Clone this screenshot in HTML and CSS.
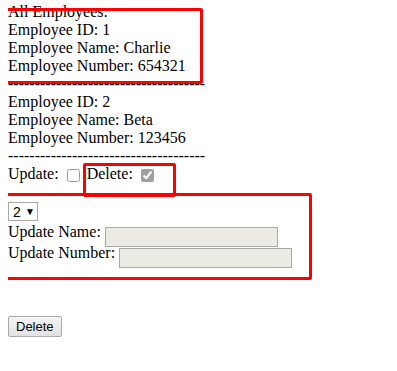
FILE: index.html
```html
<!DOCTYPE html>
<html lang="en">
<head>
    <meta charset="UTF-8">
    <title>Employees</title>
    <link rel="stylesheet" href="styles.css">
</head>
<body>
    <div class="employees">
        <div class="line">All Employees:</div>
        <div class="employee">
            <div class="line">Employee ID: 1</div>
            <div class="line">Employee Name: Charlie</div>
            <div class="line">Employee Number: 654321</div>
            <div class="line">-------------------------------------</div>
        </div>
        <div class="employee">
            <div class="line">Employee ID: 2</div>
            <div class="line">Employee Name: Beta</div>
            <div class="line">Employee Number: 123456</div>
            <div class="line">-------------------------------------</div>
        </div>
        <div class="line actions">
            Update: <input type="checkbox" class="check"> Delete: <input type="checkbox" class="check" checked>
        </div>
    </div>

    <div class="update-form">
        <div class="select-wrap">
            <select class="id-select">
                <option>2</option>
                <option>1</option>
            </select>
        </div>
        <div class="field">Update Name: <input type="text" class="text-input"></div>
        <div class="field">Update Number: <input type="text" class="text-input"></div>
    </div>

    <button class="delete-btn">Delete</button>

    <div class="mark mark-list"></div>
    <div class="mark mark-delete"></div>
    <div class="mark mark-form"></div>
</body>
</html>
```

FILE: styles.css
```css
body {
    font-family: "Liberation Serif", "Times New Roman", serif;
    font-size: 16px;
    color: #000;
    margin: 3px 8px 8px;
    position: relative;
}

.line {
    line-height: 18px;
    white-space: nowrap;
}

.actions {
    height: 20px;
}

.check {
    width: 13px;
    height: 13px;
    margin: 3px 3px 3px 4px;
    vertical-align: -3px;
    accent-color: #777;
    filter: grayscale(1) opacity(0.7);
}

.update-form {
    margin-top: 17px;
}

.select-wrap {
    position: relative;
    display: inline-block;
    height: 19px;
}

.select-wrap::after {
    content: "\25BC";
    position: absolute;
    left: 17px;
    top: 4px;
    font-family: "Liberation Sans", Arial, sans-serif;
    font-size: 10px;
    pointer-events: none;
}

.id-select {
    appearance: none;
    -webkit-appearance: none;
    width: 30px;
    height: 19px;
    padding: 0 0 0 4px;
    margin: 0;
    border: 1px solid #a9a9a9;
    border-radius: 0;
    background: #fff;
    font-family: "Liberation Sans", Arial, sans-serif;
    font-size: 14px;
    color: #000;
}

.field {
    height: 21px;
    line-height: 21px;
    white-space: nowrap;
}

.text-input {
    box-sizing: border-box;
    width: 173px;
    height: 20px;
    margin: 0;
    padding: 1px 2px;
    border: 1px solid #a9a9a9;
    background: #ebebe4;
    vertical-align: -4px;
}

.delete-btn {
    margin-top: 53px;
    box-sizing: border-box;
    height: 21px;
    padding: 1px 7px 2px;
    font-family: "Liberation Sans", Arial, sans-serif;
    font-size: 13px;
    color: #000;
    border: 1px solid #a9a9a9;
    border-radius: 2px;
    background: linear-gradient(#f5f5f5, #e1e1e1);
}

.mark {
    position: absolute;
    box-sizing: border-box;
    border: 3px solid #ff0000;
    border-radius: 2px;
}

.mark-list {
    left: -8px;
    top: 5px;
    width: 203px;
    height: 76px;
}

.mark-delete {
    left: 75px;
    top: 160px;
    width: 93px;
    height: 34px;
}

.mark-form {
    left: -8px;
    top: 190px;
    width: 312px;
    height: 87px;
}
```
